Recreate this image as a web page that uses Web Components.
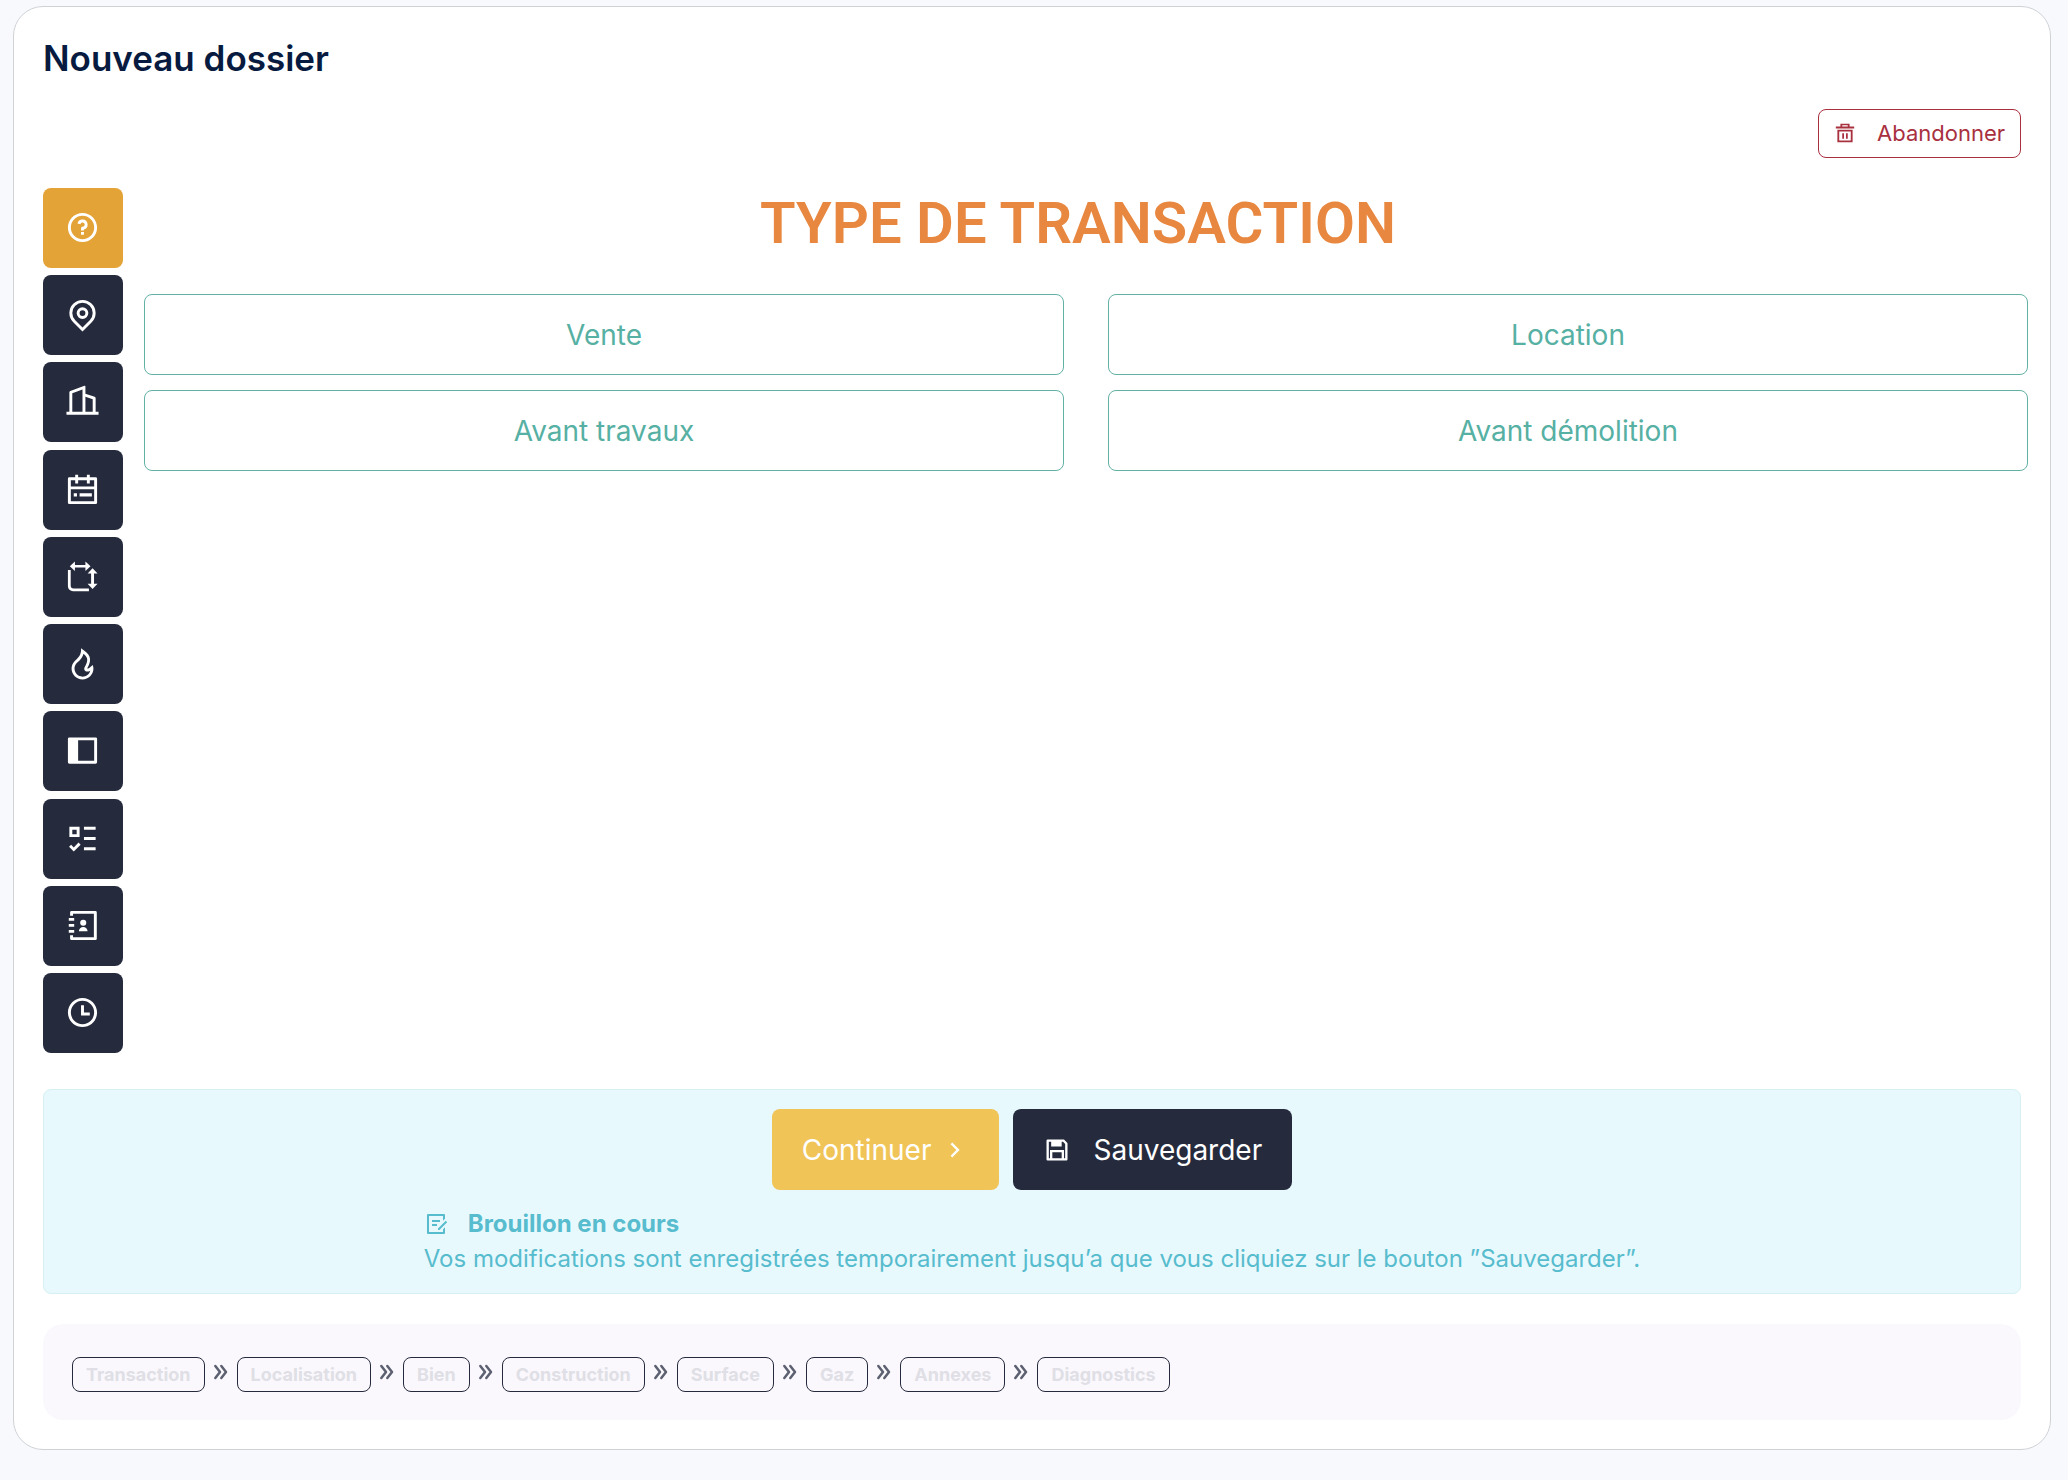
<!DOCTYPE html>
<html lang="fr">
<head>
<meta charset="utf-8">
<title>Nouveau dossier</title>
<style>
  html { background: #f8f9fd; }
  body { margin: 0; padding: 6px 17px 29px 13px; font-family: Inter, "Liberation Sans", sans-serif; color: #252b3d; }
</style>
</head>
<body>
<dossier-page></dossier-page>
<script>
const ICONS = {
  question: '<path d="M12 22C6.477 22 2 17.523 2 12S6.477 2 12 2s10 4.477 10 10-4.477 10-10 10Zm0-2a8 8 0 1 0 0-16 8 8 0 0 0 0 16ZM11 15H13V17H11V15ZM13 13.355V14H11V12.5C11 11.948 11.448 11.5 12 11.5a1.5 1.5 0 1 0-1.471-1.794L8.567 9.313A3.5 3.5 0 1 1 13 13.355Z"/>',
  pin: '<path d="M12 20.9L16.95 15.95A7 7 0 1 0 7.05 15.95L12 20.9ZM12 23.728L5.636 17.364A9 9 0 1 1 18.364 17.364L12 23.728ZM12 13A2 2 0 1 0 12 9 2 2 0 0 0 12 13ZM12 15A4 4 0 1 1 12 7 4 4 0 0 1 12 15Z"/>',
  building: '<path d="M3 19V5.7C3 5.28 3.263 4.904 3.658 4.761L13.329 1.244C13.589 1.15 13.876 1.283 13.97 1.543 13.99 1.598 14 1.656 14 1.714V6.667L20.316 8.772C20.725 8.908 21 9.29 21 9.721V19H23V21H1V19H3ZM5 19H12V3.855L5 6.401V19ZM19 19V10.442L14 8.775V19H19Z"/>',
  calendar: '<path d="M7 1.8h2v1.8h6V1.8h2v1.8h4a1 1 0 0 1 1 1v16.4a1 1 0 0 1-1 1H3a1 1 0 0 1-1-1V4.600a1 1 0 0 1 1-1h4ZM4 11.800V20H20V11.800ZM4 5.600V9.900H20V5.600H17V7.900H15V5.600H9V7.900H7V5.600ZM6 14.600h2.200v2.200H6ZM10 14.600h8.400v2.200H10Z"/>',
  area: '<path d="M2 7.500h1.900v10.700a2 2 0 0 0 2 2h10.500v1.900H5.500A3.500 3.500 0 0 1 2 18.600ZM3.300 5 6.800 1.700V4.100H14V1.700L17.500 5 14 8.300V5.900H6.800V8.300ZM18.900 6.300 22.300 9.900H19.900V16.900H22.300L18.900 20.500 15.500 16.900H17.900V9.900H15.500Z"/>',
  fire: '<path d="M12 23C16.142 23 19.5 19.642 19.5 15.5 19.5 14.635 19.27 13.803 19 13.03 17.333 14.677 16.067 15.5 15.2 15.5 19.195 8.5 17 5.5 11 1.5 11.5 6.5 8.204 8.774 6.862 10.037 5.408 11.405 4.5 13.346 4.5 15.5 4.5 19.642 7.858 23 12 23ZM12.709 5.235C15.951 7.985 15.967 10.122 13.463 14.509 12.702 15.842 13.665 17.5 15.2 17.5 15.888 17.5 16.584 17.299 17.319 16.905 16.698 19.262 14.552 21 12 21 8.962 21 6.5 18.538 6.5 15.5 6.5 13.961 7.133 12.528 8.232 11.493 8.358 11.375 8.997 10.808 9.025 10.784 9.449 10.402 9.798 10.066 10.143 9.697 11.373 8.379 12.257 6.916 12.709 5.235Z"/>',
  panel: '<path d="M3 3H21a1 1 0 0 1 1 1V20a1 1 0 0 1-1 1H3a1 1 0 0 1-1-1V4a1 1 0 0 1 1-1ZM9 5V19H20V5H9Z"/>',
  checklist: '<path d="M8 6V9H5V6H8ZM3 4V11H10V4H3ZM13 4H21V6H13V4ZM13 11H21V13H13V11ZM13 18H21V20H13V18ZM10.707 16.207L9.293 14.793 6 18.086 4.207 16.293 2.793 17.707 6 20.914 10.707 16.207Z"/>',
  contacts: '<path d="M4.500 2H20.800a1 1 0 0 1 1 1V21a1 1 0 0 1-1 1H4.500a1 1 0 0 1-1-1V18.700H5.500V20H19.800V4H5.500V5.300H3.500V3a1 1 0 0 1 1-1ZM2.600 6.900H6.300V8.800H2.600ZM2.600 11H6.300V12.900H2.600ZM2.600 15.100H6.300V17H2.600ZM12.500 8a2.100 2.100 0 1 1 0 4.200 2.100 2.100 0 0 1 0-4.200ZM9.500 16a3 3 0 0 1 6 0Z"/>',
  clock: '<path d="M12 22C6.477 22 2 17.523 2 12S6.477 2 12 2s10 4.477 10 10-4.477 10-10 10Zm0-2a8 8 0 1 0 0-16 8 8 0 0 0 0 16ZM13 12H17V14H11V7H13V12Z"/>',
  trash: '<path d="M7 1.800H17V4.800H22V7H2V4.800H7ZM9 3.600V4.800H15V3.600ZM3.700 8.500H20.300V22.200H3.700ZM5.700 10.400V20.300H18.300V10.400ZM9 12.200h1.900v6H9ZM13.100 12.200H15v6H13.100Z"/>',
  save: '<path d="M18 19H19V6.828L17.172 5H16V9H7V5H5V19H6V12H18V19ZM4 3H18L20.707 5.707A1 1 0 0 1 21 6.414V20a1 1 0 0 1-1 1H4a1 1 0 0 1-1-1V4a1 1 0 0 1 1-1ZM8 14V19H16V14H8Z"/>',
  next: '<path d="M13.172 12L8.222 7.051 9.636 5.637 16 12 9.636 18.365 8.222 16.95Z"/>',
  draft: '<path d="M20 2a1 1 0 0 1 1 1V6.757L19 8.757V4H5V20H19V17.242L21 15.242V21a1 1 0 0 1-1 1H4a1 1 0 0 1-1-1V3a1 1 0 0 1 1-1H20ZM21.778 8.808L23.192 10.222 15.414 18 13.998 17.998 14 16.586 21.778 8.808ZM13 12V14H8V12H13ZM16 8V10H8V8H16Z"/>',
  double: '<path d="M3.500 3 10.500 12 3.500 21M12.500 3 19.500 12 12.500 21" fill="none" stroke="currentColor" stroke-width="3.800" stroke-linecap="round" stroke-linejoin="round"/>'
};

function define(name, render) {
  customElements.define(name, class extends HTMLElement {
    constructor() {
      super();
      this.attachShadow({ mode: 'open' });
    }
    connectedCallback() {
      this.shadowRoot.innerHTML = render(this);
    }
  });
}

define('ui-icon', el => `
  <style>
    :host { display: inline-flex; flex: none; width: var(--icon, 24px); height: var(--icon, 24px); }
    svg { width: 100%; height: 100%; fill: currentColor; }
  </style>
  <svg viewBox="0 0 24 24" aria-hidden="true">${ICONS[el.getAttribute('name')]}</svg>`);

define('step-button', el => `
  <style>
    :host { display: block; --icon: 35px; }
    button { display: flex; align-items: center; justify-content: center; width: 80px; height: 80px;
      padding: 0 1px 1px 0; border: 0; border-radius: 8px; background: #252b3d; color: #fff; }
    :host([active]) button { background: #e4a337; }
  </style>
  <button type="button" aria-label="${el.getAttribute('label')}"><ui-icon name="${el.getAttribute('icon')}"></ui-icon></button>`);

define('choice-button', () => `
  <style>
    :host { display: block; }
    button { width: 100%; height: 81px; border: 1px solid #62b1a5; border-radius: 8px; background: #fff;
      color: #56b0a3; font-family: inherit; font-size: 28px; }
  </style>
  <button type="button"><slot></slot></button>`);

define('action-button', el => {
  const icon = el.getAttribute('icon'), end = el.getAttribute('icon-end');
  return `
  <style>
    :host { display: block; --icon: 28px; }
    button { display: flex; align-items: center; height: 81px; padding: 0 30px; border: 0; border-radius: 8px;
      background: #252b3d; color: #fff; font-family: inherit; font-size: 28px; }
    :host([tone="gold"]) button { background: #f0c457; gap: 10px; }
    :host([tone="dark"]) button { gap: 22px; }
    :host([tone="danger"]) { --icon: 22px; }
    :host([tone="danger"]) button { height: 49px; padding: 0 15px 2px; gap: 21px; border: 1px solid #a8303f;
      background: #fff; color: #a8303f; font-size: 22px; }
  </style>
  <button type="button">${icon ? `<ui-icon name="${icon}"></ui-icon>` : ''}<slot></slot>${end ? `<ui-icon name="${end}"></ui-icon>` : ''}</button>`;
});

define('draft-notice', () => `
  <style>
    :host { display: flex; flex-direction: column; align-items: center; gap: 16px; padding: 19px 19px 17px;
      border: 1px solid #d6f0f3; border-radius: 8px; background: #e8f9fe; color: #57bccd; --icon: 24px; }
    .actions { display: flex; gap: 14px; }
    .line { display: flex; align-items: center; gap: 20px; }
    p { margin: 0; font-size: 24px; line-height: 35px; }
    strong { font-weight: 700; }
  </style>
  <div class="actions"><slot name="actions"></slot></div>
  <div>
    <p class="line"><ui-icon name="draft"></ui-icon><strong><slot name="title"></slot></strong></p>
    <p><slot></slot></p>
  </div>`);

define('step-trail', el => `
  <style>
    :host { display: block; padding: 33px 29px 28px; border-radius: 20px; background: #faf8fd; --icon: 16px; }
    ol { display: flex; align-items: center; gap: 8px; margin: 0; padding: 0; list-style: none; }
    li { display: flex; align-items: center; gap: 8px; color: #5c6070; }
    a { display: block; padding: 0 13px; border: 1px solid #252b3d; border-radius: 8px; color: #dfdfe5;
      font-size: 18px; font-weight: 700; line-height: 33px; text-decoration: none; }
    ui-icon { margin-bottom: 5px; }
  </style>
  <nav aria-label="Progression"><ol>${el.getAttribute('steps').split(',').map((s, i, all) =>
    `<li><a href="#${s.toLowerCase()}">${s}</a>${i < all.length - 1 ? '<ui-icon name="double"></ui-icon>' : ''}</li>`).join('')}</ol></nav>`);

define('dossier-page', () => `
  <style>
    :host { display: block; padding: 20px 29px 29px; border: 1px solid #cfd3d6; border-radius: 30px; background: #fff; }
    h2 { margin: 0; color: #071a40; font-size: 35px; font-weight: 600; line-height: 62px; }
    .top { display: flex; justify-content: flex-end; margin-top: 20px; }
    .body { display: flex; gap: 12px; margin-top: 30px; }
    .steps { display: flex; flex-direction: column; justify-content: space-between; min-height: 865px; }
    main { flex: 1; }
    h1 { margin: 0; color: #e8873f; font-family: Roboto, "Liberation Sans", sans-serif; font-size: 58px;
      font-weight: 600; line-height: 70px; text-align: center; }
    .choices { display: grid; grid-template-columns: 1fr 1fr; gap: 15px 44px; margin: 36px -7px 0 9px; }
    draft-notice { margin-top: 36px; }
    step-trail { margin-top: 30px; }
  </style>
  <h2>Nouveau dossier</h2>
  <div class="top"><action-button tone="danger" icon="trash">Abandonner</action-button></div>
  <div class="body">
    <nav class="steps" aria-label="Étapes">
      <step-button active icon="question" label="Transaction"></step-button>
      <step-button icon="pin" label="Localisation"></step-button>
      <step-button icon="building" label="Bien"></step-button>
      <step-button icon="calendar" label="Construction"></step-button>
      <step-button icon="area" label="Surface"></step-button>
      <step-button icon="fire" label="Gaz"></step-button>
      <step-button icon="panel" label="Annexes"></step-button>
      <step-button icon="checklist" label="Diagnostics"></step-button>
      <step-button icon="contacts" label="Contacts"></step-button>
      <step-button icon="clock" label="Rendez-vous"></step-button>
    </nav>
    <main>
      <h1>TYPE DE TRANSACTION</h1>
      <div class="choices">
        <choice-button>Vente</choice-button>
        <choice-button>Location</choice-button>
        <choice-button>Avant travaux</choice-button>
        <choice-button>Avant démolition</choice-button>
      </div>
    </main>
  </div>
  <draft-notice>
    <action-button slot="actions" tone="gold" icon-end="next">Continuer</action-button>
    <action-button slot="actions" tone="dark" icon="save">Sauvegarder</action-button>
    <span slot="title">Brouillon en cours</span>
    Vos modifications sont enregistrées temporairement jusqu’a que vous cliquiez sur le bouton ”Sauvegarder”.
  </draft-notice>
  <step-trail steps="Transaction,Localisation,Bien,Construction,Surface,Gaz,Annexes,Diagnostics"></step-trail>`);
</script>
</body>
</html>
